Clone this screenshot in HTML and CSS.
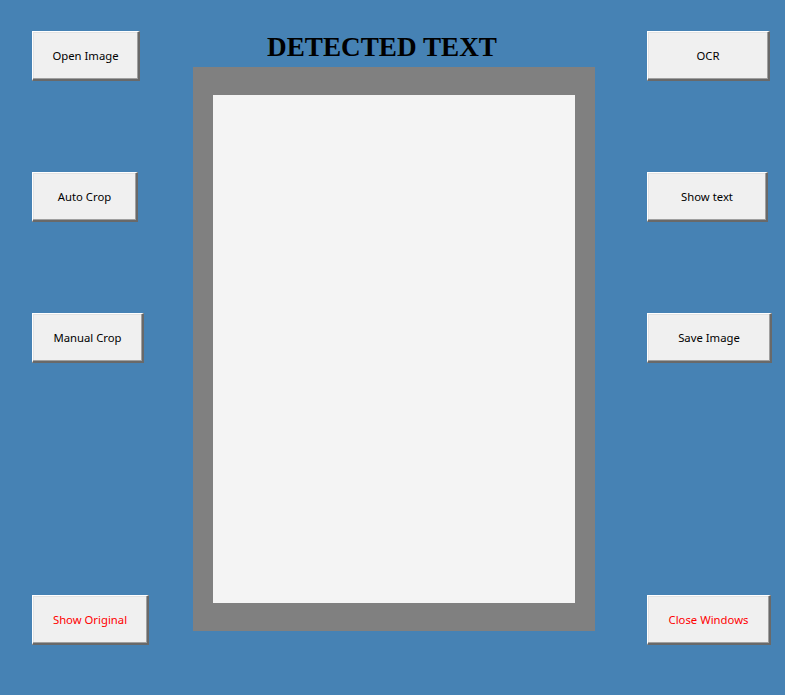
FILE: index.html
```html
<!DOCTYPE html>
<html>
<head>
<meta charset="utf-8">
<link rel="stylesheet" href="styles.css">
</head>
<body>
<div class="app">
  <div class="col col-left">
    <button class="btn w108 b1">Open Image</button>
    <button class="btn w106 b2">Auto Crop</button>
    <button class="btn w112 b2">Manual Crop</button>
    <button class="btn w117 b3 red">Show Original</button>
  </div>
  <div class="center">
    <h1 class="title">DETECTED TEXT</h1>
    <div class="frame">
      <div class="canvas"></div>
    </div>
  </div>
  <div class="col col-right">
    <button class="btn w123 b1">OCR</button>
    <button class="btn w121 b2">Show text</button>
    <button class="btn w125 b2">Save Image</button>
    <button class="btn w124 b3 red">Close Windows</button>
  </div>
</div>
</body>
</html>
```
FILE: styles.css
```css
html, body {
  margin: 0;
  padding: 0;
  background: #4682b4;
  width: 785px;
  height: 695px;
  overflow: hidden;
}
.app {
  display: flex;
  align-items: flex-start;
}
.col {
  display: flex;
  flex-direction: column;
  align-items: flex-start;
  padding-top: 31px;
}
.col-left {
  width: 193px;
  padding-left: 32px;
  box-sizing: border-box;
  flex: none;
}
.col-right {
  padding-left: 52px;
}
.btn {
  height: 50px;
  box-sizing: border-box;
  background: #f0f0f0;
  font-family: "Noto Sans", "Open Sans", sans-serif;
  font-size: 11.3px;
  color: #000;
  padding: 0 0 1px 0;
  margin: 0;
  border-style: solid;
  border-width: 1px 2px 2px 1px;
  border-color: #ffffff #696969 #696969 #ffffff;
  box-shadow: inset -1px -1px 0 #a0a0a0, inset 1px 1px 0 #e3e3e3;
  outline: none;
}
.red { color: #ff0000; }
.b1 { margin-top: 0; }
.b2 { margin-top: 91px; }
.b3 { margin-top: 232px; }
.w106 { width: 106px; }
.w108 { width: 108px; }
.w112 { width: 112px; }
.w117 { width: 117px; }
.w121 { width: 121px; }
.w123 { width: 123px; }
.w124 { width: 124px; }
.w125 { width: 125px; }
.center {
  width: 402px;
  flex: none;
  display: flex;
  flex-direction: column;
}
.title {
  margin: 0;
  padding: 29px 0 0 74px;
  height: 67px;
  box-sizing: border-box;
  text-align: left;
  font-family: "Liberation Serif", serif;
  font-weight: bold;
  font-size: 27.2px;
  line-height: 36px;
  color: #000;
  white-space: nowrap;
}
.frame {
  background: #808080;
  height: 564px;
  box-sizing: border-box;
  padding: 28px 20px;
}
.canvas {
  background: #f4f4f4;
  height: 100%;
}
```
